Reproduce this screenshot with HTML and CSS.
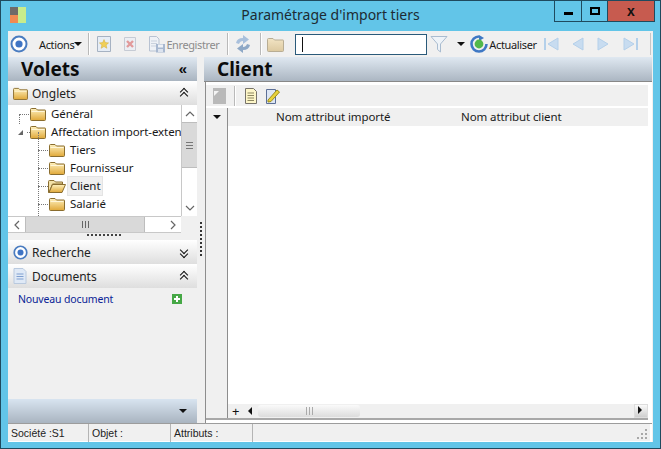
FILE: index.html
```html
<!DOCTYPE html>
<html lang="fr">
<head>
<meta charset="utf-8">
<title>Paramétrage d'import tiers</title>
<link rel="stylesheet" href="styles.css">
</head>
<body>
<svg class="defs" width="0" height="0" aria-hidden="true">
  <defs>
    <linearGradient id="fg" x1="0" y1="0" x2="0" y2="1"><stop offset="0" stop-color="#fff2c0"/><stop offset="1" stop-color="#e0a838"/></linearGradient>
    <linearGradient id="fd" x1="0" y1="0" x2="0" y2="1"><stop offset="0" stop-color="#f2e4c4"/><stop offset="1" stop-color="#dcc9a0"/></linearGradient>
    <symbol id="folder" viewBox="0 0 16 14"><path d="M.5 2.5 Q.5 1.5 1.5 1.5H6L7.5 3H15Q15.5 3 15.5 3.5V12.5Q15.5 13.5 14.5 13.5H1.5Q.5 13.5 .5 12.5Z" fill="url(#fg)" stroke="#8a6d2f"/><path d="M1.5 4.5H14.5" stroke="#fff6d8"/></symbol>
    <symbol id="folder-open" viewBox="0 0 18 14"><path d="M.5 2.5Q.5 1.5 1.5 1.5H6L7.5 3H14.5V5H4.5L1 13.5H.5Z" fill="#f3e1a8" stroke="#8a6d2f"/><path d="M4.5 5.5H17.5L14 13.5H1Z" fill="url(#fg)" stroke="#8a6d2f"/></symbol>
    <symbol id="target" viewBox="0 0 18 18"><circle cx="9" cy="9" r="7.5" fill="#fff" stroke="#4a7cc0" stroke-width="2"/><circle cx="9" cy="9" r="3.6" fill="#3f74c4"/></symbol>
    <symbol id="note" viewBox="0 0 14 16"><path d="M1.5.5H9.5L12.5 3.5V15.5H1.5Z" fill="#fdf6c8" stroke="#77736a"/><path d="M3.5 5H10M3.5 7.5H10M3.5 10H10M3.5 12.5H10" stroke="#8d8760"/></symbol>
  </defs>
</svg>
<div class="window">
  <header class="titlebar">
    <svg class="app-icon" width="16" height="16" viewBox="0 0 16 16"><rect width="8" height="8" fill="#6f6a68"/><rect y="8" width="8" height="8" fill="#f08a52"/><rect x="8" width="8" height="16" fill="#c8ec8c"/></svg>
    <h1 class="title">Paramétrage d'import tiers</h1>
    <div class="wincontrols">
      <div class="wbtn"><span class="wmin"></span></div>
      <div class="wbtn"><span class="wmax"></span></div>
      <div class="wbtn wclose">x</div>
    </div>
  </header>

  <div class="client">
    <div class="toolbar">
      <svg class="t-target" width="18" height="18"><use href="#target"/></svg>
      <span class="t-actions">Actions</span><span class="caret"></span>
      <span class="tsep sep1"></span>
      <svg class="t-new" width="16" height="16" viewBox="0 0 16 16"><path d="M1.5.5H14.5V15.5H1.5Z" fill="#e6edf6" stroke="#a6b2c2"/><path d="M8 3.5L9.3 6.6 12.6 6.9 10.1 9 10.9 12.3 8 10.5 5.1 12.3 5.9 9 3.4 6.9 6.7 6.6Z" fill="#f0cf58" stroke="#d2ab38" stroke-width=".5"/></svg>
      <svg class="t-del" width="14" height="16" viewBox="0 0 14 16"><path d="M1.5 1.5H12.5V14.5H1.5Z" fill="#eceef3" stroke="#c6cbd4"/><path d="M4 5L10 11M10 5L4 11" stroke="#e29a9a" stroke-width="2.4"/></svg>
      <svg class="t-save" width="18" height="17" viewBox="0 0 18 17"><path d="M1.5.5H8.5L11 3V15H1.5Z" fill="#eef1f6" stroke="#b8c2d2"/><path d="M3 5H9M3 7.500H9M3 10H9" stroke="#c9d1dd"/><rect x="8" y="8" width="9" height="8.500" fill="#a8b8d0"/><rect x="10" y="8.500" width="5" height="3" fill="#eef1f6"/><rect x="10" y="13" width="5" height="3" fill="#dce3ee"/></svg>
      <span class="t-label">Enregistrer</span>
      <span class="tsep sep2"></span>
      <svg class="t-sync" width="18" height="18" viewBox="0 0 18 18"><path d="M2 8Q3 3 9 3V0L15 4.500 9 9V6Q6 6 5 9Z" fill="#a9c0dc"/><path d="M16 10Q15 15 9 15V18L3 13.500 9 9V12Q12 12 13 9Z" fill="#8ea8c6"/></svg>
      <span class="tsep sep3"></span>
      <svg class="t-folder" width="17" height="15"><path d="M.5 2.500Q.5 1.500 1.500 1.500H6L7.500 3H16Q16.500 3 16.500 3.500V13.500Q16.500 14.500 15.500 14.500H1.500Q.5 14.500 .5 13.500Z" fill="url(#fd)" stroke="#b8ad94"/></svg>
      <div class="search"><span class="cursor"></span></div>
      <svg class="t-filter" width="18" height="18" viewBox="0 0 18 18"><path d="M1 1.500H17L10.500 9V17L7.500 14.500V9Z" fill="#eef3f8" stroke="#a9bcd0"/></svg>
      <span class="caret caret2"></span>
      <svg class="t-refresh" width="18" height="18" viewBox="0 0 18 18"><path d="M9 1.500A7.500 7.500 0 1 0 16.500 9" fill="none" stroke="#3f78c4" stroke-width="2.600"/><path d="M9 0L14 3 9 6Z" fill="#3f78c4"/><circle cx="9" cy="9" r="4.400" fill="#52b84a"/></svg>
      <span class="t-actu">Actualiser</span>
      <svg class="t-nav nav1" width="15" height="14" viewBox="0 0 15 14"><path d="M1 1V13" stroke="#b4d0ea" stroke-width="2"/><path d="M14 1V13L4 7Z" fill="#c8dcf0" stroke="#b4d0ea"/></svg>
      <svg class="t-nav nav2" width="13" height="14" viewBox="0 0 13 14"><path d="M12 1V13L2 7Z" fill="#c8dcf0" stroke="#b4d0ea"/></svg>
      <svg class="t-nav nav3" width="13" height="14" viewBox="0 0 13 14"><path d="M1 1V13L11 7Z" fill="#c8dcf0" stroke="#b4d0ea"/></svg>
      <svg class="t-nav nav4" width="15" height="14" viewBox="0 0 15 14"><path d="M1 1V13L11 7Z" fill="#c8dcf0" stroke="#b4d0ea"/><path d="M14 1V13" stroke="#b4d0ea" stroke-width="2"/></svg>
      <span class="tsep sep4"></span>
    </div>

    <div class="main">
      <aside class="left">
        <div class="bighead"><span>Volets</span><span class="chev-l">«</span></div>
        <div class="sect sect-first">
          <svg class="sect-ic ic-folder" width="15" height="13" viewBox="0 0 16 14"><use href="#folder"/></svg>
          <span class="sect-name">Onglets</span>
          <span class="chev chev-up"></span>
        </div>
        <div class="treebox">
          <div class="tree">
            <div class="node l1 first"><svg width="16" height="14"><use href="#folder"/></svg><span>Général</span></div>
            <div class="node l1 second"><span class="expander"></span><svg width="16" height="14"><use href="#folder"/></svg><span>Affectation import-exten</span></div>
            <div class="node l2"><svg width="16" height="14"><use href="#folder"/></svg><span>Tiers</span></div>
            <div class="node l2"><svg width="16" height="14"><use href="#folder"/></svg><span>Fournisseur</span></div>
            <div class="node l2 sel"><svg width="18" height="14"><use href="#folder-open"/></svg><span>Client</span></div>
            <div class="node l2"><svg width="16" height="14"><use href="#folder"/></svg><span>Salarié</span></div>
          </div>
          <div class="vscroll">
            <div class="sbtn"><svg width="10" height="6" viewBox="0 0 10 6"><path d="M1 5L5 1 9 5" fill="none" stroke="#666" stroke-width="1.200"/></svg></div>
            <div class="vthumb"><span class="grip-v"></span></div>
            <div class="vrest"></div>
            <div class="sbtn"><svg width="10" height="6" viewBox="0 0 10 6"><path d="M1 1L5 5 9 1" fill="none" stroke="#666" stroke-width="1.200"/></svg></div>
          </div>
          <div class="hscroll">
            <div class="sbtn sbtn-h"><svg width="6" height="10" viewBox="0 0 6 10"><path d="M5 1L1 5 5 9" fill="none" stroke="#666" stroke-width="1.200"/></svg></div>
            <div class="hthumb"><span class="grip-h"></span></div>
            <div class="hrest"></div>
            <div class="sbtn sbtn-h"><svg width="6" height="10" viewBox="0 0 6 10"><path d="M1 1L5 5 1 9" fill="none" stroke="#666" stroke-width="1.200"/></svg></div>
          </div>
        </div>
        <div class="gripper"><span></span></div>
        <div class="sect">
          <svg class="sect-ic ic-target" width="15" height="15" viewBox="0 0 18 18"><use href="#target"/></svg>
          <span class="sect-name">Recherche</span>
          <span class="chev chev-down"></span>
        </div>
        <div class="sect">
          <svg class="sect-ic ic-doc" width="14" height="16" viewBox="0 0 14 16"><path d="M1 .5H10L13 3.500V15.500H1Z" fill="#dfe9f6" stroke="#b9c9de"/><path d="M3.500 6H10.500M3.500 8.500H10.500M3.500 11H10.500" stroke="#7f9fd0"/></svg>
          <span class="sect-name">Documents</span>
          <span class="chev chev-up"></span>
        </div>
        <div class="docs">
          <a class="doclink">Nouveau document</a>
          <span class="plus"></span>
        </div>
        <div class="leftfoot"><span class="caret"></span></div>
      </aside>

      <div class="split"></div>

      <section class="right">
        <div class="bighead"><span>Client</span></div>
        <div class="pane">
          <div class="ptool">
            <svg class="p1" width="13" height="16" viewBox="0 0 13 16"><path d="M0 0H13V16H0Z" fill="#b9b9b9"/><path d="M1 8L6 3H1Z" fill="#f4f4f4"/></svg>
            <span class="tsep p-sep"></span>
            <svg class="p2" width="14" height="16"><use href="#note"/></svg>
            <svg class="p3" width="15" height="16" viewBox="0 0 15 16"><path d="M1.500 1.500H10.500V15.500H1.500Z" fill="#dde6f4" stroke="#5c6f96"/><path d="M3 12L12 2 14.500 4 6 13.500 3 14Z" fill="#e8d23c" stroke="#9c8c1c"/></svg>
          </div>
          <div class="grid">
            <div class="rowhead">
              <div class="corner"><span class="caret"></span></div>
            </div>
            <div class="gridmain">
              <div class="gridhead"><span class="col1">Nom attribut importé</span><span class="col2">Nom attribut client</span></div>
              <div class="gridbody"></div>
              <div class="gridscroll">
                <span class="plusrow">+</span>
                <span class="arrow-l"></span>
                <span class="gthumb"><span></span></span>
                <span class="grest"></span>
                <span class="arrow-r"></span>
              </div>
            </div>
          </div>
        </div>
      </section>
    </div>

    <footer class="status">
      <div class="st st1">Société :S1</div>
      <div class="st st2">Objet :</div>
      <div class="st st3">Attributs :</div>
      <div class="st st4"></div>
      <svg class="resize" width="10" height="10" viewBox="0 0 10 10"><path d="M8 0h2v2H8zM4 4h2v2H4zM8 4h2v2H8zM0 8h2v2H0zM4 8h2v2H4zM8 8h2v2H8z" fill="#a8a8a8"/></svg>
    </footer>
  </div>
</div>
</body>
</html>
```
FILE: styles.css
```css
* { box-sizing: border-box; }
html, body { margin: 0; padding: 0; }
body { width: 661px; height: 449px; overflow: hidden; font-family: "Noto Sans", "Open Sans", sans-serif; font-size: 11.5px; color: #1a1a1a; }
.defs { position: absolute; }
.window { width: 661px; height: 449px; background: #62c5e8; border: 1px solid #1f4a5e; display: flex; flex-direction: column; padding: 0 7px 6px; }
.titlebar { height: 30px; flex: none; display: flex; align-items: flex-start; position: relative; margin: 0 -7px; padding-left: 9px; }
.app-icon { margin-top: 6px; flex: none; }
.title { position: absolute; left: 0; right: 0; top: 4px; margin: 0; text-align: center; font-weight: 400; font-size: 14px; line-height: 20px; color: #1d2b33; }
.wincontrols { position: absolute; right: 5px; top: 0; height: 21px; display: flex; border: 1px solid #1f4a5e; border-top: 0; }
.wbtn { width: 27px; height: 20px; display: flex; align-items: center; justify-content: center; border-right: 1px solid #1f4a5e; }
.wbtn:nth-child(2) { width: 26px; }
.wmin { width: 9px; height: 3px; background: #000; margin-top: 4px; }
.wmax { width: 10px; height: 8px; border: 2px solid #000; }
.wclose { width: 46px; background: #c75b4f; border-right: 0; font: 700 14px/18px "Liberation Sans", sans-serif; color: #111; }
.client { flex: 1; min-height: 0; display: flex; flex-direction: column; background: #f0f0f0; }
.toolbar { height: 26px; flex: none; display: flex; align-items: center; background: #f0f0f0; }
.toolbar > * { flex: none; }
.t-target { margin-left: 2px; }
.t-actions { margin-left: 11px; font-size: 11px; letter-spacing: -.35px; }
.caret { display: inline-block; width: 0; height: 0; border-left: 4px solid transparent; border-right: 4px solid transparent; border-top: 4px solid #111; }
.tsep { width: 1px; height: 22px; background: #b9b9b9; box-shadow: 1px 0 #fff; }
.sep1 { margin-left: 6px; }
.t-new { margin-left: 7px; }
.t-del { margin-left: 11px; }
.t-save { margin-left: 11px; }
.t-label { color: #8c8c8c; font-size: 11px; margin-left: 0; letter-spacing: -.4px; }
.sep2 { margin-left: 8px; }
.t-sync { margin-left: 6px; }
.sep3 { margin-left: 8px; }
.t-folder { margin-left: 6px; }
.search { width: 132px; height: 21px; margin-left: 11px; border: 1px solid #2a5a7a; background: #fff; padding: 2px 0 0 6px; }
.cursor { display: block; width: 1px; height: 15px; background: #111; }
.t-filter { margin-left: 3px; }
.caret2 { margin-left: 9px; }
.t-refresh { margin-left: 5px; }
.t-actu { font-size: 11px; margin-left: 1px; letter-spacing: -.35px; }
.t-nav { margin-left: 12px; }
.nav1 { margin-left: 7px; }
.nav3 { margin-left: 13px; }
.nav4 { margin-left: 13px; }
.sep4 { margin-left: 12px; background: #c6c6c6; box-shadow: none; }
.main { flex: 1; min-height: 0; display: flex; }
.left { width: 189px; flex: none; display: flex; flex-direction: column; background: #f0f0f0; }
.split { width: 7px; flex: none; position: relative; }
.split::before { content: ""; position: absolute; left: 3px; top: 165px; height: 34px; border-left: 2px dotted #333; }
.right { flex: 1; min-width: 0; display: flex; flex-direction: column; }
.bighead { height: 24px; flex: none; display: flex; align-items: center; justify-content: space-between; padding: 0 7px 0 13px; background: linear-gradient(#dfe8f1, #a9b4c0); font: 700 19px/24px "Noto Sans", sans-serif; color: #0c0c0c; }
.right .bighead { height: 25px; padding-left: 13px; box-shadow: inset 0 -1px #888; margin-right: 1px; }
.right .bighead span { margin-top: -1px; }
.chev-l { font: 700 15px/20px "Liberation Sans", sans-serif; margin-right: 3px; }
.sect { height: 24px; flex: none; display: flex; align-items: center; background: linear-gradient(#fff, #dedede); font-size: 12px; color: #222; position: relative; }
.ic-folder, .ic-target { margin-left: 5px; }
.ic-doc { margin-left: 5px; }
.sect-name { position: absolute; left: 24px; top: 4px; line-height: 18px; }
.chev { position: absolute; left: 171px; top: 7px; width: 9px; height: 10px; }
.chev::before, .chev::after { content: ""; position: absolute; left: 2px; width: 5px; height: 5px; border-left: 1.500px solid #111; border-top: 1.500px solid #111; transform: rotate(45deg); }
.chev-up::before { top: 1px; } .chev-up::after { top: 5px; }
.chev-down::before { top: 0; transform: rotate(225deg); } .chev-down::after { top: 4px; transform: rotate(225deg); }
.treebox { height: 128px; flex: none; display: grid; grid-template-columns: 173px 16px; grid-template-rows: 111px 17px; background: #f0f0f0; }
.tree { overflow: hidden; position: relative; font-size: 11.5px; background: #fff; letter-spacing: -.08px; }
.node { height: 18px; display: flex; align-items: center; position: relative; white-space: nowrap; }
.node svg { flex: none; }
.node span { line-height: 18px; }
.l1 { padding-left: 22px; }
.l1 svg { margin-right: 5px; }
.l2 { padding-left: 41px; }
.l2 svg { margin-right: 5px; }
.node::before { content: ""; position: absolute; top: 9px; border-top: 1px dotted #777; }
.l1::before { left: 11px; width: 10px; }
.second::before { left: 19px; width: 3px; }
.l2::before { left: 30px; width: 10px; }
.first::after { content: ""; position: absolute; left: 11px; top: 9px; height: 10px; border-left: 1px dotted #777; }
.l2::after { content: ""; position: absolute; left: 30px; top: -9px; height: 18px; border-left: 1px dotted #777; }
.l2:last-child::after { height: 32px; }
.expander { position: absolute; left: 10px; top: 7px; width: 0; height: 0; border-bottom: 5px solid #666; border-left: 5px solid transparent; z-index: 1; }
.sel span:last-child { background: #f0f0f0; box-shadow: 0 0 0 1px #e4e4e4; padding: 0 2px; margin-left: -2px; }
.sel svg { margin-left: -1px; margin-right: 4px; }
.vscroll { display: flex; flex-direction: column; background: #fff; border-left: 1px solid #c8c8c8; }
.sbtn { height: 17px; flex: none; display: flex; align-items: center; justify-content: center; background: #fff; }
.vthumb { height: 46px; flex: none; background: #d9d9d9; border: 1px solid #bdbdbd; border-width: 1px 0; display: flex; align-items: center; justify-content: center; }
.grip-v { width: 7px; height: 7px; border-top: 1px solid #777; border-bottom: 1px solid #777; position: relative; }
.grip-v::after { content: ""; position: absolute; left: 0; right: 0; top: 2px; height: 1px; background: #777; }
.vrest { flex: 1; background: #fff; }
.hscroll { grid-column: 1 / 2; display: flex; background: #fff; border: 1px solid #c8c8c8; border-width: 1px 0; }
.sbtn-h { width: 17px; height: auto; }
.hthumb { width: 120px; flex: none; background: #d9d9d9; border: 1px solid #bdbdbd; border-width: 0 1px; display: flex; align-items: center; justify-content: center; }
.grip-h { width: 7px; height: 7px; border-left: 1px solid #666; border-right: 1px solid #666; position: relative; }
.grip-h::after { content: ""; position: absolute; top: 0; bottom: 0; left: 2px; width: 1px; background: #666; }
.hrest { flex: 1; }
.gripper { height: 7px; flex: none; display: flex; justify-content: center; }
.gripper span { width: 34px; height: 2px; margin-top: 1px; margin-left: 3px; border-top: 2px dotted #444; }
.docs { flex: 1; min-height: 0; position: relative; padding: 3px 0 0 10px; font-size: 10.500px; line-height: 17px; }
.doclink { color: #0a1e96; letter-spacing: -.15px; }
.plus { position: absolute; left: 164px; top: 6px; width: 10px; height: 10px; background: linear-gradient(#fff, #fff) center / 6px 2px no-repeat, linear-gradient(#fff, #fff) center / 2px 6px no-repeat, #46a846; }
.leftfoot { height: 24px; flex: none; background: linear-gradient(#d8e4f0, #a9b4c0); position: relative; }
.leftfoot .caret { position: absolute; left: 171px; top: 10px; }
.pane { flex: 1; min-height: 0; display: flex; flex-direction: column; background: #fff; border-left: 1px solid #8d8d8d; margin: 0 1px 0 1px; padding: 3px 4px 3px 0; }
.ptool { height: 21px; flex: none; display: flex; align-items: center; background: #f0f0f0; margin-bottom: 2px; }
.ptool > * { flex: none; }
.p1 { margin-left: 7px; }
.p-sep { height: 20px; margin-left: 8px; }
.p2 { margin-left: 9px; }
.p3 { margin-left: 7px; }
.grid { flex: 1; min-height: 0; display: flex; border-bottom: 2px solid #a8a8a8; }
.rowhead { width: 22px; flex: none; background: #f0f0f0; border-right: 1px solid #8d8d8d; }
.corner { height: 18px; padding: 7px 0 0 7px; display: flex; align-items: flex-start; }
.gridmain { flex: 1; min-width: 0; display: flex; flex-direction: column; }
.gridhead { height: 18px; flex: none; position: relative; background: #f0f0f0; font-size: 11.5px; line-height: 18px; letter-spacing: -.1px; }
.col1 { position: absolute; left: 48px; top: 0; }
.col2 { position: absolute; left: 233px; top: 0; }
.gridbody { flex: 1; background: #fff; }
.gridscroll { height: 14px; flex: none; display: flex; align-items: center; background: #f0f0f0; position: relative; }
.plusrow { width: 8px; margin-left: 4px; flex: none; font-size: 13px; line-height: 14px; color: #111; }
.arrow-l { width: 0; height: 0; margin-left: 8px; border: 4px solid transparent; border-right: 4px solid #111; border-left: 0; }
.gthumb { width: 102px; height: 12px; margin-left: 6px; background: linear-gradient(#fafafa, #dcdcdc); border-radius: 3px; display: flex; align-items: center; justify-content: center; flex: none; }
.gthumb span { width: 7px; height: 8px; border-left: 1px solid #aaa; border-right: 1px solid #aaa; position: relative; }
.gthumb span::after { content: ""; position: absolute; left: 2px; top: 0; bottom: 0; width: 1px; background: #aaa; }
.grest { flex: 1; }
.arrow-r { width: 14px; height: 14px; flex: none; background: linear-gradient(#fafafa, #cfcfcf); position: relative; border: 1px solid #ddd; }
.arrow-r::after { content: ""; position: absolute; left: 3px; top: 1px; border: 4px solid transparent; border-left: 4px solid #111; border-right: 0; }
.status { height: 19px; flex: none; display: flex; align-items: stretch; background: #f0f0f0; border-top: 1px solid #9c9c9c; box-shadow: inset 0 -1px #fff, inset -2px 0 #fff; margin-right: 1px; position: relative; font: 10.500px/18px "Liberation Sans", sans-serif; color: #222; }
.st { border-right: 1px solid #b4b4b4; padding-left: 3px; flex: none; }
.st1 { width: 81px; }
.st2 { width: 82px; }
.st3 { width: 82px; }
.st4 { flex: 1; border-right: 0; }
.resize { position: absolute; right: 5px; bottom: 3px; }
```
